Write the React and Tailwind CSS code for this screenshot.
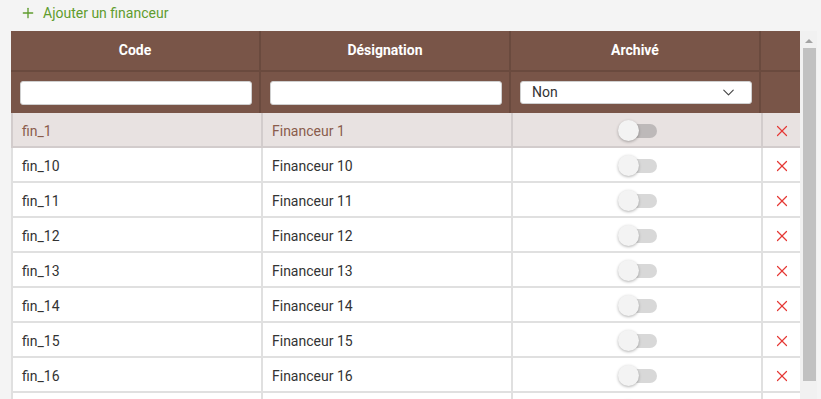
import { Plus, ChevronDown, X } from 'lucide-react';

const rows = ['1', '10', '11', '12', '13', '14', '15', '16', '17'];

const Toggle = ({ active }) => (
    <div className="relative w-[39px] h-[21px] flex items-center">
        <div className={`ml-[2px] w-[37px] h-[14px] rounded-full ${active ? 'bg-[#bdb9b9]' : 'bg-[#d8d8d8]'}`} />
        <div className="absolute left-0 top-0 w-[21px] h-[21px] rounded-full bg-[#f3f3f3] shadow-[0_1px_3px_rgba(0,0,0,0.3)]" />
    </div>
);

const App = () => {
    return (
        <div className="h-screen overflow-hidden bg-[#f4f4f4] font-['Roboto',sans-serif] text-[14px]">
            {/* Add button */}
            <div className="h-[31px] flex items-center pl-[20px] pb-[5px]">
                <button className="flex items-center gap-[7px] text-[#5f9c2e] text-[14px]">
                    <Plus size={16} strokeWidth={2} />
                    <span>Ajouter un financeur</span>
                </button>
            </div>

            {/* Table + scrollbar */}
            <div className="ml-[11px] flex h-[420px] overflow-hidden">
                <div className="w-[789px]">
                    {/* Header */}
                    <div className="bg-[#795548] text-white font-bold">
                        <div className="grid grid-cols-[250px_250px_250px_39px] h-[41px] border-b-2 border-[#6a4a3e]">
                            <div className="flex items-center justify-center border-r-2 border-[#6a4a3e]">Code</div>
                            <div className="flex items-center justify-center border-r-2 border-[#6a4a3e]">Désignation</div>
                            <div className="flex items-center justify-center border-r-2 border-[#6a4a3e]">Archivé</div>
                            <div />
                        </div>
                        <div className="grid grid-cols-[250px_250px_250px_39px] h-[41px] font-normal">
                            <div className="flex items-center pl-[9px] pr-[7px] border-r-2 border-[#6a4a3e]">
                                <input className="w-full h-[24px] bg-white rounded-[3px] border border-[#cfcfcf] outline-none" />
                            </div>
                            <div className="flex items-center pl-[9px] pr-[7px] border-r-2 border-[#6a4a3e]">
                                <input className="w-full h-[24px] bg-white rounded-[3px] border border-[#cfcfcf] outline-none" />
                            </div>
                            <div className="flex items-center pl-[9px] pr-[7px] border-r-2 border-[#6a4a3e]">
                                <div className="w-full h-[23px] bg-white rounded-[3px] border border-[#cfcfcf] flex items-center justify-between pl-[11px] pr-[13px] text-[#333]">
                                    <span>Non</span>
                                    <ChevronDown size={19} strokeWidth={1.4} className="text-[#444]" />
                                </div>
                            </div>
                            <div />
                        </div>
                    </div>

                    {/* Body */}
                    {rows.map((n, i) => {
                        const active = i === 0;
                        const cell = active
                            ? 'border-r-2 border-[#d2cccc]'
                            : 'border-r-2 border-[#e0e0e0]';
                        return (
                            <div
                                key={n}
                                className={`grid grid-cols-[250px_250px_250px_39px] h-[35px] border-b-2 border-l-2 ${
                                    active
                                        ? 'bg-[#e8e2e1] text-[#8a5c4c] border-[#d2cccc]'
                                        : 'bg-white text-[#333] border-[#e0e0e0]'
                                }`}
                            >
                                <div className={`flex items-center pl-[9px] pt-[3px] ${cell}`}>fin_{n}</div>
                                <div className={`flex items-center pl-[9px] pt-[3px] ${cell}`}>Financeur {n}</div>
                                <div className={`flex items-center justify-center pt-[2px] ${cell}`}>
                                    <Toggle active={active} />
                                </div>
                                <div className={`flex items-center justify-center pt-[3px] ${cell}`}>
                                    <X size={18} strokeWidth={1.6} className="text-[#e53935]" />
                                </div>
                            </div>
                        );
                    })}
                </div>

                {/* Scrollbar */}
                <div className="w-[17px] h-full bg-[#f1f1f1] flex flex-col items-center">
                    <div className="h-[17px] flex items-center justify-center">
                        <div className="w-0 h-0 border-l-[4px] border-r-[4px] border-b-[4px] border-l-transparent border-r-transparent border-b-[#a3a3a3] mt-[2px]" />
                    </div>
                    <div className="mt-0 ml-[2px] w-[13px] h-[333px] bg-[#c1c1c1]" />
                </div>
            </div>
        </div>
    );
};

export default App;
